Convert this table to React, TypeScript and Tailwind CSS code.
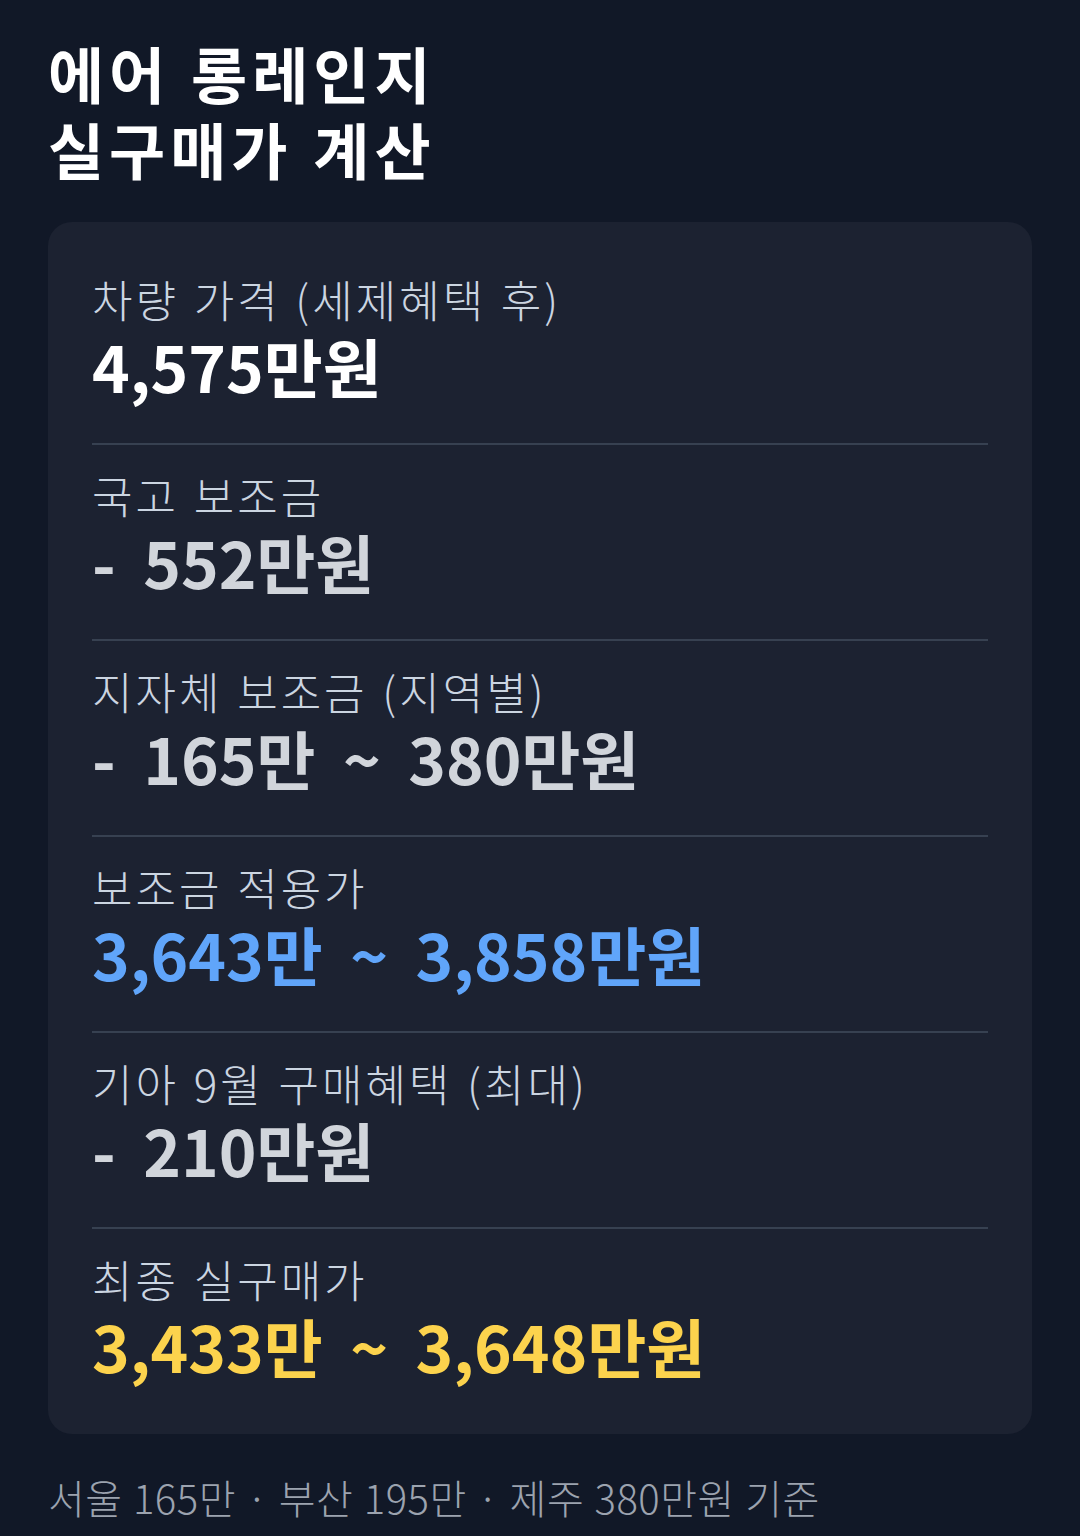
const font = { fontFamily: '"Noto Sans CJK KR", "Noto Sans", sans-serif' };

type Row = {
  label: string;
  value: string;
  color: string;
};

const rows: Row[] = [
  { label: "차량 가격 (세제혜택 후)", value: "4,575만원", color: "text-white" },
  { label: "국고 보조금", value: "- 552만원", color: "text-[#d1d5db]" },
  { label: "지자체 보조금 (지역별)", value: "- 165만 ~ 380만원", color: "text-[#d1d5db]" },
  { label: "보조금 적용가", value: "3,643만 ~ 3,858만원", color: "text-[#60a5fa]" },
  { label: "기아 9월 구매혜택 (최대)", value: "- 210만원", color: "text-[#d1d5db]" },
  { label: "최종 실구매가", value: "3,433만 ~ 3,648만원", color: "text-[#fcd34d]" },
];

export default function App() {
  return (
    <div className="min-h-screen bg-[#111827] px-[48px] pt-[35px] pb-10" style={font}>
      <h1 className="text-[61px] leading-[76px] font-bold tracking-[5px] [word-spacing:2px] text-white">
        에어 롱레인지
        <br />
        실구매가 계산
      </h1>

      <div className="mt-[35px] rounded-[24px] bg-[#1c2231] px-[44px] pt-[27px] pb-[9px]">
        {rows.map((row, i) => (
          <div
            key={row.label}
            className={
              "pt-[24px] " + (i < rows.length - 1 ? "pb-[38px] border-b-2 border-[#374151]" : "pb-[40px]")
            }
          >
            <div className="text-[44px] leading-[53px] font-light tracking-[3px] [word-spacing:2px] text-[#cbd5e1]">
              {row.label}
            </div>
            <div
              className={
                "text-[64px] leading-[79px] font-bold whitespace-pre [word-spacing:13px] " + row.color
              }
            >
              {row.value}
            </div>
          </div>
        ))}
      </div>

      <p className="mt-[35px] text-[40px] leading-[56px] font-light tracking-[0.5px] [word-spacing:1px] text-[#9ca3af]">
        서울 165만 · 부산 195만 · 제주 380만원 기준
      </p>
    </div>
  );
}
